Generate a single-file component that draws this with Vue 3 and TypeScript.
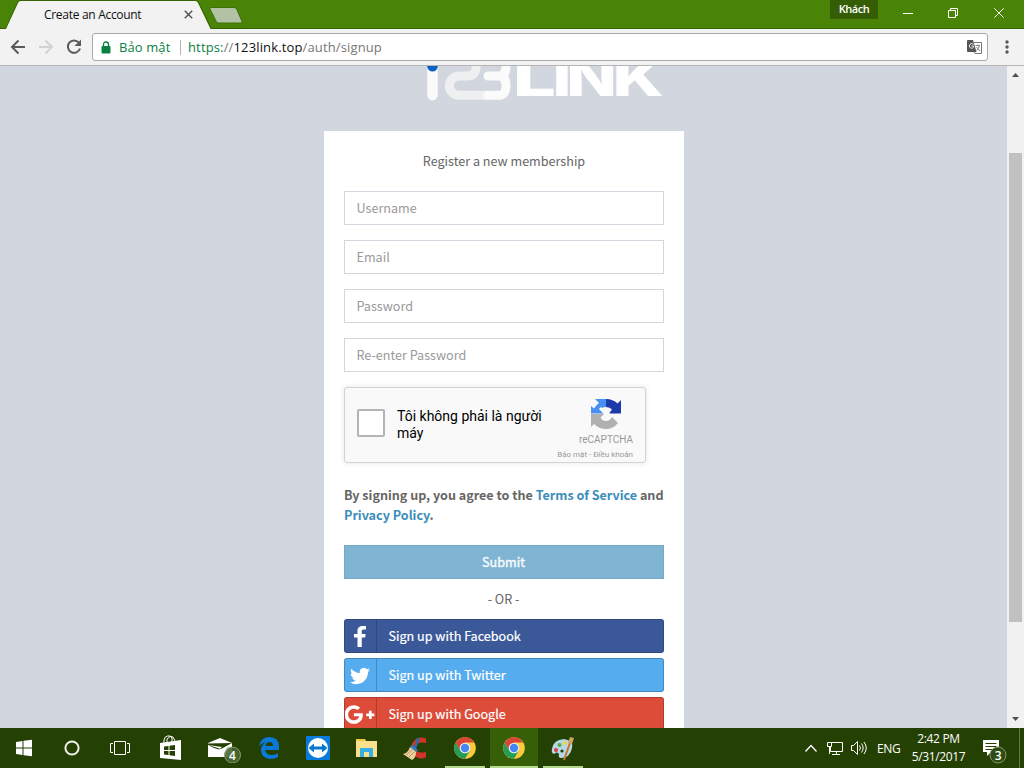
<script setup lang="ts">
import { ref } from 'vue'

interface Field { name: string; label: string; type: string }
interface Provider { id: string; label: string }

const fields: Field[] = [
  { name: 'username', label: 'Username', type: 'text' },
  { name: 'email', label: 'Email', type: 'text' },
  { name: 'password', label: 'Password', type: 'password' },
  { name: 'repeat', label: 'Re-enter Password', type: 'password' },
]
const providers: Provider[] = [
  { id: 'facebook', label: 'Sign up with Facebook' },
  { id: 'twitter', label: 'Sign up with Twitter' },
  { id: 'google', label: 'Sign up with Google' },
]
const apps: string[] = ['store', 'mail', 'edge', 'viewer', 'files', 'cleaner', 'chrome', 'chrome-active', 'paint']
const human = ref(false)
</script>

<template>
  <div class="screen">
    <header class="titlebar">
      <div class="tab">
        <svg class="tab-shape" width="246" height="29" viewBox="0 0 246 29">
          <path d="M0 28.5H6L17.5 2.5Q18.500 .5 20 .5H196Q197.500 .5 198.500 2.500L211 28.500H246" fill="none" stroke="#376105" />
          <path d="M6 29L18 3Q19 1 20.500 1H195.500Q197 1 198 3L210.500 29Z" fill="#f2f2f2" />
          <path d="M211 7.500H234Q236 7.500 236.600 9L242 21.500Q242.500 23 240.500 23H219Q217 23 216.400 21.700L210 9Q209.400 7.500 211 7.500Z" fill="#b2c2a4" stroke="#40700a" />
        </svg>
        <span class="tab-title">Create an Account</span>
        <svg class="tab-close" width="9" height="9" viewBox="0 0 9 9"><path d="M.8 .8L8.200 8.200M8.200 .8L.8 8.200" stroke="#555" stroke-width="1.500" /></svg>
      </div>
      <div class="window-tools">
        <span class="guest">Khách</span>
        <svg width="146" height="28" viewBox="0 0 146 28" fill="none" stroke="#fff">
          <path d="M25 13.500H35M70.500 10.500H77.500V17.500H70.500ZM72.500 10V8.500H79.500V15.500H78M116.300 8.300L125.700 17.700M125.700 8.300L116.300 17.700" />
        </svg>
      </div>
    </header>

    <div class="toolbar">
      <svg class="nav-icons" width="92" height="36" viewBox="0 0 92 36" fill="none" stroke-width="2">
        <path d="M25 18H12.500M18.500 11.500L12 18L18.500 24.500" stroke="#5a5a5a" />
        <path d="M39 18H51.500M45.500 11.500L52 18L45.500 24.500" stroke="#d2d2d2" />
        <path d="M78.800 13.600A6.200 6.200 0 1 0 80 19.500" stroke="#5a5a5a" />
        <path d="M81 10.500V17H74.500Z" fill="#5a5a5a" />
      </svg>
      <div class="omnibox">
        <svg width="10" height="13" viewBox="0 0 10 13"><path d="M2.500 6V3.500Q2.500 1 5 1T7.500 3.500V6" fill="none" stroke="#0b8043" stroke-width="1.400" /><rect x=".5" y="5" width="9" height="7.500" rx="1" fill="#0b8043" /></svg>
        <span class="secure">Bảo mật</span>
        <span class="divider"></span>
        <span class="url"><span class="scheme">https:</span>//<b>123link.top</b>/auth/signup</span>
        <svg class="translate" width="15" height="15" viewBox="0 0 15 15">
          <path d="M7 2.500H14.500V13.500H8L6.500 11" fill="#fff" stroke="#777" />
          <path d="M1 0H6L9.500 12H1Q0 12 0 11V1Q0 0 1 0Z" fill="#555" />
          <path d="M6.500 4.500A2.300 2.300 0 1 0 6.600 7.200V6H4.500" fill="none" stroke="#e8e8e8" />
          <path d="M8.500 5.500H13M11 4.500V5.500M12.500 5.500Q11.500 9 9.500 10.500M9.500 7L13 11" fill="none" stroke="#777" stroke-width=".9" />
        </svg>
      </div>
      <svg class="menu" width="6" height="36" viewBox="0 0 6 36" fill="#5a5a5a"><circle cx="3" cy="13" r="1.700" /><circle cx="3" cy="18" r="1.700" /><circle cx="3" cy="23" r="1.700" /></svg>
    </div>

    <div class="viewport">
      <main class="page">
        <svg class="logo" width="240" height="36" viewBox="422 66 240 36">
          <path d="M431.500 62V95" stroke="#fafafa" stroke-width="10.500" stroke-linecap="round" />
          <circle cx="431.500" cy="66.300" r="5.300" fill="#0860c4" />
          <path d="M475 62V67Q475 76 466 76H458A9.500 9.500 0 0 0 458 95.300H486" fill="none" stroke="#eeeff0" stroke-width="9" />
          <path d="M505 62V66Q505 76 498 76H487M498 76Q505 76 505 86T496 95.300H487" fill="none" stroke="#fbfbfc" stroke-width="9" stroke-linecap="round" />
          <text class="logo-text" transform="scale(1.27 1)" y="96"><tspan x="402.900" textLength="34" lengthAdjust="spacingAndGlyphs">L</tspan><tspan x="434.200">I</tspan><tspan x="445">N</tspan><tspan x="481.500" textLength="40.500" lengthAdjust="spacingAndGlyphs">K</tspan></text>
        </svg>

        <form class="card" @submit.prevent>
          <p class="intro">Register a new membership</p>
          <input v-for="f in fields" :key="f.name" class="field" :type="f.type" :placeholder="f.label" />
          <div class="captcha">
            <button class="check" type="button" :aria-pressed="human" @click="human = !human"></button>
            <span class="captcha-text">Tôi không phải là người máy</span>
            <div class="captcha-brand">
              <svg width="32" height="32" viewBox="0 0 32 32">
                <path d="M1 15.500V8L4 10.500Q6 7 9 5L5 1H16V9Q12 9 11.500 11L14 15.500Z" fill="#4a90f0" />
                <path d="M16 1Q23 1 27.500 5.500L31 2V15.500H19L22 11.500Q20 9 16 9Z" fill="#1c3aa9" />
                <path d="M1 16H14L10.500 19.500Q12 23 16 23Q20 23 22 19L28 25Q23 31 16 31Q9 31 4 26L1 29Z" fill="#b0b0b0" />
                <path d="M10 10L15 15M21 19L17 15" stroke="#f9f9f9" stroke-width="3" />
              </svg>
              <span class="brand-name">reCAPTCHA</span>
              <span class="brand-links">Bảo mật - Điều khoản</span>
            </div>
          </div>
          <p class="terms">By signing up, you agree to the <a>Terms of Service</a> and<br><a>Privacy Policy</a>.</p>
          <button class="submit" type="submit">Submit</button>
          <p class="or">- OR -</p>
          <button v-for="p in providers" :key="p.id" type="button" class="social" :class="p.id">
            <span class="social-icon">
              <svg v-if="p.id === 'facebook'" width="12" height="21" viewBox="0 0 264 512" preserveAspectRatio="none"><path fill="#fff" d="M76.700 512V283H0v-91h76.700v-71.700C76.700 42.400 124.300 0 193.800 0c33.300 0 61.900 2.500 70.200 3.600V85h-48.200c-37.800 0-45.100 18-45.100 44.300V192H256l-11.700 91h-73.600v229" /></svg>
              <svg v-else-if="p.id === 'twitter'" width="20" height="20" viewBox="0 0 24 24"><path fill="#fff" d="M23.953 4.570a10 10 0 01-2.825.775 4.958 4.958 0 002.163-2.723c-.951.555-2.005.959-3.127 1.184a4.920 4.920 0 00-8.384 4.482C7.690 8.095 4.067 6.130 1.640 3.162a4.822 4.822 0 00-.666 2.475c0 1.710.87 3.213 2.188 4.096a4.904 4.904 0 01-2.228-.616v.06a4.923 4.923 0 003.946 4.827 4.996 4.996 0 01-2.212.085 4.936 4.936 0 004.604 3.417 9.867 9.867 0 01-6.102 2.105c-.39 0-.779-.023-1.170-.067a13.995 13.995 0 007.557 2.209c9.053 0 13.998-7.496 13.998-13.985 0-.21 0-.42-.015-.63A9.935 9.935 0 0024 4.590z" /></svg>
              <svg v-else width="31" height="25" viewBox="0 0 640 512"><path fill="#fff" d="M386.061 228.496c1.834 9.692 3.143 19.384 3.143 31.956C389.204 370.205 315.599 448 204.800 448c-106.084 0-192-85.915-192-192s85.916-192 192-192c51.864 0 95.083 18.859 128.611 50.292l-52.126 50.030c-14.145-13.621-39.028-29.599-76.485-29.599-65.484 0-118.920 54.221-118.920 121.277 0 67.056 53.436 121.277 118.920 121.277 75.961 0 104.513-54.745 108.965-82.773H204.800v-66.009h181.261zm185.406 6.437V179.200h-56.001v55.733h-55.733v56.001h55.733v55.733h56.001v-55.733H627.200v-56.001h-55.733z" /></svg>
            </span>
            <span class="social-label">{{ p.label }}</span>
          </button>
        </form>
      </main>
      <aside class="scrollbar">
        <svg width="17" height="17" viewBox="0 0 17 17"><path d="M5 11L8.500 7L12 11Z" fill="#505050" /></svg>
        <div class="track"><div class="thumb"></div></div>
        <svg width="17" height="17" viewBox="0 0 17 17"><path d="M5 6L8.500 10L12 6Z" fill="#505050" /></svg>
      </aside>
    </div>

    <footer class="taskbar">
      <svg width="147" height="40" viewBox="0 0 147 40">
        <path d="M16 14L22.500 13V19.500H16ZM23.500 12.800L32 11.700V19.500H23.500ZM16 20.500H22.500V27L16 26ZM23.500 20.500H32V28.300L23.500 27.200Z" fill="#fff" />
        <circle cx="72" cy="20" r="6.600" fill="none" stroke="#f0f0f0" stroke-width="2" />
        <path d="M114.500 13.500H125.500V26.500H114.500ZM113 15.500H110.500V24.500H113M127 15.500H129.500V24.500H127" fill="none" stroke="#fff" />
      </svg>
      <div v-for="app in apps" :key="app" class="app" :class="app">
        <svg v-if="app === 'store'" width="24" height="26" viewBox="0 0 24 26">
          <path d="M1 8L22 5V25L1 23Z" fill="#fff" /><path d="M5 8V5Q5 2 8.500 1Q12 0 13 3V7M8 8V4Q11 0 14 2L16 6" fill="none" stroke="#fff" />
          <path d="M5 11.500L9.500 11V15H5ZM10.500 10.800L16 10V15H10.500ZM5 16H9.500V20L5 19.500ZM10.500 16H16V21L10.500 20.200Z" fill="#244003" />
        </svg>
        <svg v-else-if="app === 'mail'" width="40" height="30" viewBox="0 0 40 30">
          <path d="M4 10L16 5L28 10V24H4Z" fill="#fff" /><path d="M4 10.500L28 10L17 16L4 12M4 12L10 15L15 16.500L18 14" fill="#244003" />
          <circle cx="28.500" cy="22" r="8" fill="#4a6633" fill-opacity=".9" stroke="#87986f" /><path d="M20 22L24 14" stroke="#9aa98b" /><text x="28.500" y="26.500" text-anchor="middle" class="badge">4</text>
        </svg>
        <svg v-else-if="app === 'edge'" width="22" height="24" viewBox="0 0 22 24"><path d="M1 10Q3 1 11.500 1Q21 1 21 11V14H7Q8 19 14 19Q18 19 20 17V21Q17 23 12 23Q3 22 3 14Q3 9 8 6Q4 7 1 10ZM7.500 10H15Q15 6 11.500 6Q8.500 6 7.500 10Z" fill="#0a79d8" fill-rule="evenodd" /></svg>
        <svg v-else-if="app === 'viewer'" width="24" height="24" viewBox="0 0 24 24"><rect width="24" height="24" rx="1" fill="#087bdc" /><circle cx="12" cy="12" r="10" fill="#fff" /><path d="M2.500 12L8 7.500V10.500H16V7.500L21.500 12L16 16.500V13.500H8V16.500Z" fill="#0877ce" /></svg>
        <svg v-else-if="app === 'files'" width="24" height="22" viewBox="0 0 24 22"><path d="M1 2H10L11 4H22V20H1Z" fill="#fbe08c" /><path d="M1 2H10V4H1Z" fill="#f0c742" /><path d="M5 20V12Q5 11 6 11H17Q18 11 18 12V20H14V15H9V20Z" fill="#32b0e7" /></svg>
        <svg v-else-if="app === 'cleaner'" width="26" height="26" viewBox="0 0 26 26"><path d="M23 8V3.500A10.500 10.500 0 1 0 23 22.500V17Q13 19 13 13Q14 6 23 8Z" fill="#cf3329" /><path d="M15.500 3L12 13" stroke="#1f6faf" stroke-width="2.500" /><path d="M9 10L15 15L13 17L7 12Z" fill="#2c80bd" /><path d="M7 12L13 17Q13 23 9 25L0 19Q5 18 7 12Z" fill="#ecd09c" /><path d="M3 20L9 15M6 22L11 17" stroke="#b99059" /></svg>
        <svg v-else-if="app === 'paint'" width="25" height="25" viewBox="0 0 25 25"><path d="M1 13Q2 4 13 3Q23 5 21 12Q19 22 10 22Q7 22 8 18Q6 15 3 18Q0 17 1 13Z" fill="#b6d6e9" /><circle cx="5" cy="14" r="2" fill="#dc3f36" /><circle cx="8.500" cy="9" r="2" fill="#5fad38" /><circle cx="14" cy="7" r="2" fill="#f0d444" /><circle cx="11" cy="15" r="1.600" fill="#244003" /><path d="M13 24L19 7" stroke="#cc7624" stroke-width="2" /><path d="M17 7L19 1L23 2L21 8Z" fill="#cda36b" /></svg>
        <svg v-else width="22" height="22" viewBox="0 0 22 22">
          <circle cx="11" cy="11" r="10.800" fill="#fbcb3c" />
          <path d="M1.650 5.600A10.800 10.800 0 0 1 20.350 5.600H11L6.300 13.700Z" fill="#db4437" />
          <path d="M1.650 5.600A10.800 10.800 0 0 0 11 21.800L15.700 13.700L6.300 13.700Z" fill="#249d58" />
          <circle cx="11" cy="11" r="5.300" fill="#f3f3f3" /><circle cx="11" cy="11" r="4.200" fill="#4486f4" />
        </svg>
      </div>
      <div class="tray">
        <svg width="70" height="40" viewBox="0 0 70 40" fill="none" stroke="#fff">
          <path d="M5.500 23.500L11 17.500L16.500 23.500" stroke-width="1.300" />
          <path d="M31.500 14.500H42.500V23.500H30.500V19M36.500 23.500V26.500M32 26.500H40M27.500 14.500H31.500V18.500H27.500ZM29.500 18.500V26" />
          <path d="M51.500 17.500H53.500L57.500 13.500V26.500L53.500 22.500H51.500ZM59.500 17.500Q61.500 20 59.500 22.500M61.500 15.500Q64.800 20 61.500 24.500M64 14Q68.500 20 64 26" />
        </svg>
        <span class="lang">ENG</span>
        <div class="clock"><span>2:42 PM</span><span>5/31/2017</span></div>
        <svg width="40" height="40" viewBox="979 0 40 40"><path d="M983 12H999V24H991L987 28V24H983Z" fill="#fff" /><path d="M985.500 15.500H996.500M985.500 18.500H996.500M985.500 21.500H993" stroke="#244003" /><circle cx="998" cy="27" r="8" fill="#304b12" stroke="#82946c" /><text x="998" y="31.500" text-anchor="middle" class="badge">3</text></svg>
        <span class="peek"></span>
      </div>
    </footer>
  </div>
</template>

<style>
html, body { overflow: hidden; }
</style>

<style scoped>
* { box-sizing: border-box; }
p { margin: 0; }
button, input { margin: 0; padding: 0; font: inherit; }
svg { display: block; flex: none; }
.screen { width: 1024px; height: 768px; display: flex; flex-direction: column; overflow: hidden; font-family: "Open Sans", "Noto Sans", sans-serif; }
.titlebar { height: 29px; flex: none; display: flex; justify-content: space-between; background: #4a8406; border-bottom: 1px solid #3a6605; }
.tab { position: relative; width: 246px; height: 29px; display: flex; align-items: center; padding-left: 44px; }
.tab-shape { position: absolute; left: 0; top: 0; }
.tab-title { position: relative; width: 140px; font-size: 12px; letter-spacing: -0.3px; color: #111; white-space: nowrap; }
.tab-close { position: relative; }
.window-tools { display: flex; align-items: flex-start; }
.guest { width: 48px; height: 19px; background: #355d06; color: #fff; font-size: 11px; font-weight: 600; line-height: 18px; text-align: center; letter-spacing: -0.5px; }
.toolbar { height: 37px; flex: none; display: flex; align-items: center; background: #f2f2f2; border-bottom: 1px solid #b4b4b6; }
.omnibox { width: 896px; height: 28px; display: flex; align-items: center; border: 1px solid #a9a9a9; border-radius: 3px; background: #fff; padding: 0 5px 0 8px; font-size: 13px; white-space: nowrap; }
.secure { margin-left: 8px; width: 61px; color: #0b8043; letter-spacing: 0.1px; }
.divider { width: 1px; height: 15px; background: #b5b5b5; margin-right: 7px; }
.url { color: #777; letter-spacing: 0.14px; }
.url b { font-weight: 400; color: #111; }
.scheme { color: #0b8043; }
.translate { margin-left: auto; }
.menu { margin-left: 15.5px; }
.viewport { height: 662px; flex: none; display: flex; background: #d2d6de; overflow: hidden; }
.page { width: 1007px; display: flex; flex-direction: column; align-items: center; font-family: "Noto Sans CJK SC", sans-serif; font-size: 12.600px; line-height: 20px; color: #666; overflow: hidden; }
.logo { margin: 0 0 29px 78px; }
.logo-text { font: 800 52px Inter, sans-serif; fill: #fff; }
.card { width: 360px; height: 640px; flex: none; background: #fff; padding: 20px; margin-left: 1px; display: flex; flex-direction: column; }
.intro { text-align: center; margin-bottom: 20px; }
.field { width: 320px; height: 34px; flex: none; border: 1px solid #d2d6de; padding: 0 12px 2px 11.500px; margin-bottom: 15px; background: #fff; outline: none; }
.field::placeholder { color: #999; opacity: 1; }
.captcha { width: 302px; height: 76px; flex: none; display: flex; align-items: center; background: #f9f9f9; border: 1px solid #d3d3d3; border-radius: 3px; box-shadow: 0 0 4px 1px rgba(0,0,0,.08); padding: 0 12px; font-family: Roboto, sans-serif; color: #000; margin-bottom: 22px; }
.check { width: 28px; height: 28px; flex: none; border: 2px solid #b4b4b4; border-radius: 2px; background: #fff; margin-top: -5px; }
.captcha-text { width: 152px; margin-left: 12px; font-size: 14px; line-height: 17px; }
.captcha-brand { flex: 1; display: flex; flex-direction: column; align-items: flex-end; color: #999; padding-top: 8px; white-space: nowrap; }
.captcha-brand svg { margin-right: 11px; }
.brand-name { font-size: 10px; line-height: 12px; margin-top: 4px; }
.brand-links { font-size: 8px; line-height: 10px; margin-top: 4px; }
.terms { font-weight: 700; white-space: nowrap; margin-bottom: 20px; letter-spacing: -0.020px; }
.terms a { color: #3c8dbc; }
.submit { height: 34px; flex: none; background: #80b4d3; border: 1px solid #76a9c8; color: #f5fafd; padding-right: 1px; margin-bottom: 10px; }
.or { text-align: center; margin-bottom: 10px; padding-right: 1px; }
.social { height: 34px; flex: none; display: flex; align-items: stretch; border: 1px solid rgba(0,0,0,.2); border-radius: 3px; color: #fff; margin-bottom: 5px; overflow: hidden; background-clip: border-box; text-align: left; }
.social { -webkit-text-stroke: 0.200px currentColor; }
.submit { -webkit-text-stroke: 0.450px currentColor; }
.social-icon { width: 32px; display: flex; justify-content: center; align-items: center; border-right: 1px solid rgba(0,0,0,.2); }
.social-icon svg { margin-right: 2px; }
.twitter .social-icon svg, .google .social-icon svg { margin-top: 1px; }
.social-label { padding-left: 11.500px; line-height: 32px; }
.facebook { background-color: #3b5998; }
.twitter { background-color: #55acee; }
.google { background-color: #dd4b39; }
.scrollbar { width: 17px; display: flex; flex-direction: column; background: #f1f1f1; }
.track { flex: 1; padding: 70px 2px 0; }
.thumb { height: 469px; background: #c1c1c1; }
.taskbar { height: 40px; flex: none; display: flex; background: #244003; color: #fff; }
.app { width: 48px; height: 40px; margin-right: 1px; display: flex; align-items: center; justify-content: center; }
.mail svg { margin-left: 8px; }
.chrome, .paint { background: linear-gradient(#b5d98c, #b5d98c) center bottom / 40px 2px no-repeat; }
.chrome-active { background: #375f07; border-bottom: 2px solid #b5d98c; }
.chrome-active svg { margin-top: 2px; }
.badge { font: 600 12px "Open Sans", sans-serif; fill: #fff; }
.tray { margin-left: auto; display: flex; align-items: center; font-size: 12px; letter-spacing: -0.35px; }
.lang { width: 35px; padding-left: 7px; }
.clock { width: 67px; height: 40px; display: flex; flex-direction: column; justify-content: center; line-height: 18px; text-align: center; margin-right: 7px; }
.peek { width: 5px; height: 40px; border-left: 1px solid #657951; }
</style>
